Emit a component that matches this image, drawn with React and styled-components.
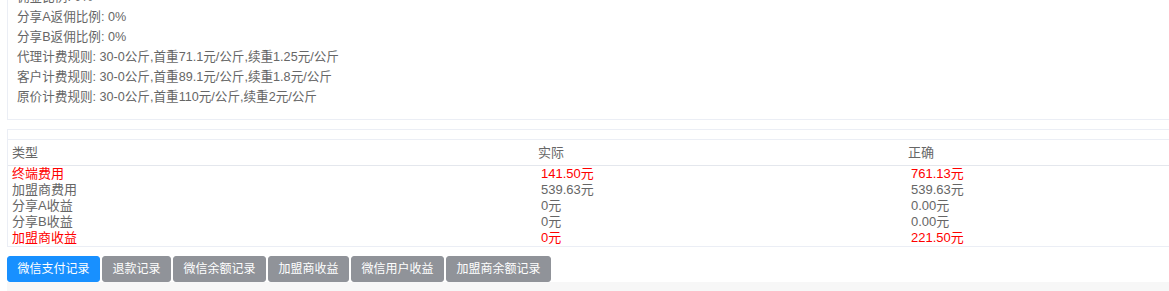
import styled, { createGlobalStyle } from "styled-components"

const GlobalStyle = createGlobalStyle`
  html, body {
    margin: 0;
    padding: 0;
    background: #fff;
    overflow: hidden;
  }
  body {
    font-family: "Liberation Sans", "Noto Sans CJK SC", sans-serif;
    color: #666;
  }
`

const infoLines = [
  "佣金比例: 0%",
  "分享A返佣比例: 0%",
  "分享B返佣比例: 0%",
  "代理计费规则: 30-0公斤,首重71.1元/公斤,续重1.25元/公斤",
  "客户计费规则: 30-0公斤,首重89.1元/公斤,续重1.8元/公斤",
  "原价计费规则: 30-0公斤,首重110元/公斤,续重2元/公斤",
]

const rows = [
  { type: "终端费用", actual: "141.50元", right: "761.13元", red: true },
  { type: "加盟商费用", actual: "539.63元", right: "539.63元" },
  { type: "分享A收益", actual: "0元", right: "0.00元" },
  { type: "分享B收益", actual: "0元", right: "0.00元" },
  { type: "加盟商收益", actual: "0元", right: "221.50元", red: true },
]

const tabs = ["微信支付记录", "退款记录", "微信余额记录", "加盟商收益", "微信用户收益", "加盟商余额记录"]

const App = () => {
  return (
    <>
      <GlobalStyle />
      <Page>
        <InfoPanel>
          {infoLines.map((line) => (
            <InfoLine key={line}>{line}</InfoLine>
          ))}
        </InfoPanel>

        <TablePanel>
          <PanelHead />
          <HeadRow>
            <Cell>类型</Cell>
            <Cell>实际</Cell>
            <Cell>正确</Cell>
          </HeadRow>
          <div>
            {rows.map((r) => (
              <Row key={r.type} $red={r.red}>
                <Cell>{r.type}</Cell>
                <Cell $shift>{r.actual}</Cell>
                <Cell $shift>{r.right}</Cell>
              </Row>
            ))}
          </div>
        </TablePanel>

        <Tabs>
          {tabs.map((t, i) => (
            <TabButton key={t} $active={i === 0}>{t}</TabButton>
          ))}
        </Tabs>
        <GrayArea />
      </Page>
    </>
  )
}

const Page = styled.div`
  width: 1200px;
  padding: 0 0 0 7px;
`

const InfoPanel = styled.div`
  margin-top: -21px;
  border: 1px solid #ebeef5;
  padding: 7px 10px 12px 9px;
  font-size: 12.6px;
`

const InfoLine = styled.div`
  line-height: 20px;
  height: 20px;
  white-space: nowrap;
`

const TablePanel = styled.div`
  margin-top: 9px;
  border: 1px solid #ebeef5;
`

const PanelHead = styled.div`
  height: 9px;
  border-bottom: 1px solid #ebeef5;
`

const cols = "526px 370px 1fr"

const HeadRow = styled.div`
  display: grid;
  grid-template-columns: ${cols};
  height: 25px;
  line-height: 25px;
  font-size: 13px;
  border-bottom: 1px solid #e4e7ed;
`

const Row = styled.div`
  display: grid;
  grid-template-columns: ${cols};
  height: 16px;
  line-height: 16px;
  font-size: 13px;
  color: ${(p) => (p.$red ? "#ff0000" : "#666")};
`

const Cell = styled.div`
  padding-left: ${(p) => (p.$shift ? "7px" : "4px")};
  white-space: nowrap;
`

const Tabs = styled.div`
  display: flex;
  margin-top: 9px;
  gap: 2px;
`

const TabButton = styled.button`
  height: 26px;
  padding: 0 9.5px;
  border: 1px solid ${(p) => (p.$active ? "#1890ff" : "#909399")};
  border-radius: 3px;
  background: ${(p) => (p.$active ? "#1890ff" : "#909399")};
  color: #fff;
  font-family: "Liberation Sans", "Noto Sans CJK SC", sans-serif;
  font-size: 12px;
  line-height: 24px;
  cursor: pointer;
`

const GrayArea = styled.div`
  height: 40px;
  background: #f7f7f7;
`

export default App
